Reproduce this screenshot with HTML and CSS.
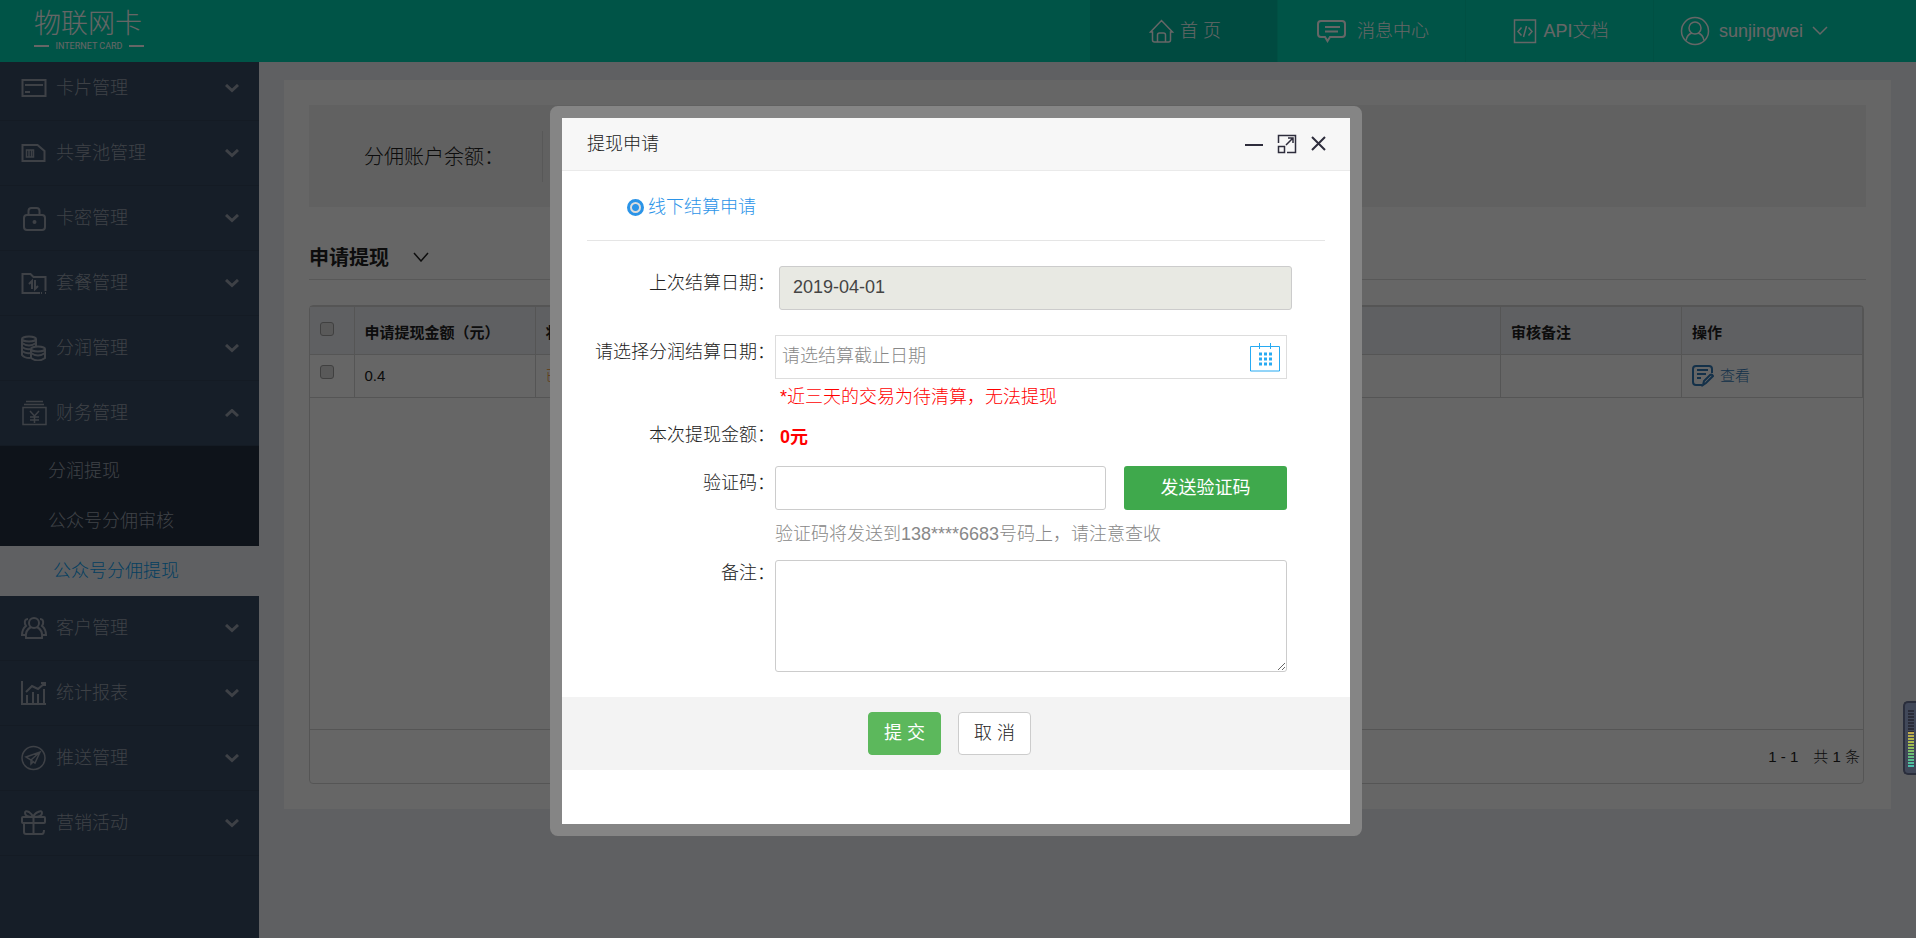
FILE: index.html
```html
<!DOCTYPE html>
<html lang="zh-CN">
<head>
<meta charset="utf-8">
<title>物联网卡</title>
<link rel="stylesheet" href="styles.css">
</head>
<body>
<header class="topbar">
  <div class="logo">
    <strong class="logo-name">物联网卡</strong>
    <span class="logo-sub">INTERNET CARD</span>
  </div>
  <nav class="topnav">
    <a class="topnav-item is-active" href="#"><svg width="25" height="26" viewBox="0 0 25 26"><path d="M3.500 14H1.500L12.500 2.500 23.500 14h-2v8q0 2-2 2h-14q-2 0-2-2zM8.500 24v-7q0-2 2-2h4q2 0 2 2v7"/></svg><span>首 页</span></a>
    <a class="topnav-item is-wide" href="#"><svg class="heavy" width="29" height="26" viewBox="0 0 29 26"><path d="M4 3h21q3 0 3 3v10q0 3-3 3H13l-2.500 4L8 19H4q-3 0-3-3V6q0-3 3-3zM8 9h15M8 13.500h13"/></svg><span>消息中心</span></a>
    <a class="topnav-item" href="#"><svg width="24" height="26" viewBox="0 0 24 26"><path d="M1.500 2h21v22.500h-21zM8.500 9.500l-3.500 4 3.500 4M15.500 9.500l3.500 4-3.500 4M13.500 8l-3 11"/></svg><span>API文档</span></a>
    <a class="topnav-item is-user" href="#"><svg width="30" height="30" viewBox="0 0 30 30"><circle cx="15" cy="15" r="13.500"/><circle cx="15" cy="12" r="6"/><path d="M6 24.500q1-6 6-7.500M24 24.500q-1-6-6-7.500"/></svg><span>sunjingwei</span><svg width="16" height="10" viewBox="0 0 16 10"><path d="m1 1 7 7 7-7"/></svg></a>
  </nav>
</header>
<div class="shell">
  <nav class="sidebar">
    <ul class="menu">
      <li><a class="menu-item" href="#"><svg width="26" height="26" viewBox="0 0 26 26"><path d="M1.500 5h23v16h-23zM4 10h18M4 17h5"/></svg><span>卡片管理</span><svg class="arrow" width="14" height="9" viewBox="0 0 14 9"><path d="m1 1 6 5.500 6-5.500"/></svg></a></li>
      <li><a class="menu-item" href="#"><svg width="26" height="26" viewBox="0 0 26 26"><path d="M1.500 5h15l7 6v10h-22z"/><path class="thin" d="M5.500 10h7v7h-7zM8 10v7M10.500 10v7"/></svg><span>共享池管理</span><svg class="arrow" width="14" height="9" viewBox="0 0 14 9"><path d="m1 1 6 5.500 6-5.500"/></svg></a></li>
      <li><a class="menu-item" href="#"><svg width="26" height="26" viewBox="0 0 26 26"><rect x="3" y="10" width="21" height="15" rx="3"/><path d="M7.500 10V6q0-3 3-3h5q3 0 3 3v4"/><circle cx="13.500" cy="17" r="1"/></svg><span>卡密管理</span><svg class="arrow" width="14" height="9" viewBox="0 0 14 9"><path d="m1 1 6 5.500 6-5.500"/></svg></a></li>
      <li><a class="menu-item" href="#"><svg width="26" height="26" viewBox="0 0 26 26"><path d="M19 23H1.500V4h8l3 3h12v14M8 14l3-3v8M14 10v9l3-3M20 23h1M24 23h1"/></svg><span>套餐管理</span><svg class="arrow" width="14" height="9" viewBox="0 0 14 9"><path d="m1 1 6 5.500 6-5.500"/></svg></a></li>
      <li><a class="menu-item" href="#"><svg width="26" height="26" viewBox="0 0 26 26"><ellipse cx="8" cy="4" rx="7" ry="2.500"/><path d="M1 4v16q2 3 8 3M15 4v7M1 8q7 5 14 0M1 12q4 3 8 2M1 16q4 3 8 2"/><ellipse cx="17" cy="14" rx="7" ry="2.500"/><path d="M10 14v9q7 5 14 0v-9M10 18q7 5 14 0"/></svg><span>分润管理</span><svg class="arrow" width="14" height="9" viewBox="0 0 14 9"><path d="m1 1 6 5.500 6-5.500"/></svg></a></li>
      <li>
        <a class="menu-item is-open" href="#"><svg class="thin" width="26" height="26" viewBox="0 0 26 26"><path d="M5 1.500h17M3 4.500h20M2 7.500h23v17H2zM9 11l4.500 5 4.500-5M9 17h9M9 20h9M13.500 16v7"/></svg><span>财务管理</span><svg class="arrow" width="14" height="9" viewBox="0 0 14 9"><path d="m1 7 6-5.500 6 5.500"/></svg></a>
        <ul class="submenu">
          <li><a href="#">分润提现</a></li>
          <li><a href="#">公众号分佣审核</a></li>
          <li><a class="is-current" href="#">公众号分佣提现</a></li>
        </ul>
      </li>
      <li><a class="menu-item" href="#"><svg width="26" height="26" viewBox="0 0 26 26"><circle cx="13" cy="8" r="5"/><path d="M10 12q-6 3-5 11h16q1-8-5-11M7 4q-4 0-3 5l1 2q-4 3-4 9h3M19 4q4 0 3 5l-1 2q4 3 4 9h-3"/></svg><span>客户管理</span><svg class="arrow" width="14" height="9" viewBox="0 0 14 9"><path d="m1 1 6 5.500 6-5.500"/></svg></a></li>
      <li><a class="menu-item" href="#"><svg width="26" height="26" viewBox="0 0 26 26"><path d="M1 1v23h24M6 23v-8M12 23V12M17 23v-9M23 23V9M5 12l6-6 6 3 7-6M20 3h4v3"/></svg><span>统计报表</span><svg class="arrow" width="14" height="9" viewBox="0 0 14 9"><path d="m1 1 6 5.500 6-5.500"/></svg></a></li>
      <li><a class="menu-item" href="#"><svg class="thin" width="26" height="26" viewBox="0 0 26 26"><circle cx="12.500" cy="13" r="11.500"/><path d="m5 12 14-5-5 11-4-3zM10 15l9-8M10 15v4l2-2"/></svg><span>推送管理</span><svg class="arrow" width="14" height="9" viewBox="0 0 14 9"><path d="m1 1 6 5.500 6-5.500"/></svg></a></li>
      <li><a class="menu-item" href="#"><svg width="26" height="26" viewBox="0 0 26 26"><rect x="1" y="7" width="23" height="6" rx="1"/><path d="M3 13v9q0 2 2 2h16q2 0 2-4M12.500 7v17M12 7Q4 7 4 3q0-3 4-1 3 2 4 5 2-4 5-5 4-2 4 1 0 4-8 4"/></svg><span>营销活动</span><svg class="arrow" width="14" height="9" viewBox="0 0 14 9"><path d="m1 1 6 5.500 6-5.500"/></svg></a></li>
    </ul>
  </nav>
  <main class="content">
    <section class="panel">
      <div class="balance"><span class="balance-label">分佣账户余额<span class="colon">：</span></span></div>
      <h1 class="section-title">申请提现<svg width="16" height="10" viewBox="0 0 16 10"><path d="m1 1 7 8 7-8"/></svg></h1>
      <div class="grid">
        <table class="records">
          <colgroup><col class="col-check"><col class="col-std"><col class="col-std"><col><col class="col-std"><col class="col-std"></colgroup>
          <thead>
            <tr><th><input type="checkbox" aria-label="全选"></th><th>申请提现金额（元）</th><th>状态</th><th></th><th>审核备注</th><th>操作</th></tr>
          </thead>
          <tbody>
            <tr><td><input type="checkbox" aria-label="选择"></td><td>0.4</td><td class="status">已审核</td><td></td><td></td><td><a class="view" href="#"><svg width="22" height="22" viewBox="0 0 22 22"><path d="M10 20H4q-3 0-3-3V4q0-3 3-3h13q3 0 3 3v4M5 5h11M5 9h9M5 13h4"/><path d="m11 20 1-4 6-6q2-1 3 1l-7 7z"/></svg>查看</a></td></tr>
          </tbody>
        </table>
        <footer class="pager"><span>1 - 1</span><span>共 1 条</span></footer>
      </div>
    </section>
  </main>
</div>
<div class="overlay">
  <div class="dialog" role="dialog" aria-labelledby="dialog-title">
    <header class="dialog-head">
      <h2 id="dialog-title">提现申请</h2>
      <button type="button" aria-label="最小化"><svg width="20" height="20" viewBox="0 0 20 20"><path d="M1 11h18"/></svg></button>
      <button type="button" aria-label="最大化"><svg class="thin" width="20" height="20" viewBox="0 0 20 20"><path d="M1.500 9V1.500h17v17H10M1.500 12.500h6v6h-6zM9 11l7-7M11 4h5v5"/></svg></button>
      <button type="button" aria-label="关闭"><svg width="20" height="20" viewBox="0 0 20 20"><path d="m4 3 13 13M17 3 4 16"/></svg></button>
    </header>
    <form class="form">
      <div class="mode"><input type="radio" id="offline" name="mode" checked><label for="offline">线下结算申请</label></div>
      <div class="row row-last"><label for="last">上次结算日期：</label><div class="field inset"><input class="box is-disabled" id="last" type="text" value="2019-04-01" readonly></div></div>
      <div class="row row-date"><label for="end">请选择分润结算日期：</label><div class="field">
        <div class="date"><input class="box" id="end" type="text" placeholder="请选结算截止日期"><svg class="calendar" width="30" height="30" viewBox="0 0 30 30"><path d="M.500 4.500h29v24.500H.500zM9.500 1v6M20.500 1v6"/><path class="dots" d="M9 12h14M9 17h14M9 22h14"/></svg></div>
        <p class="warn">*近三天的交易为待清算，无法提现</p></div></div>
      <div class="row row-amount"><span class="label">本次提现金额：</span><strong class="amount">0元</strong></div>
      <div class="row row-code"><label for="code">验证码：</label><div class="field">
        <div class="code"><input class="box" id="code" type="text"><button class="send" type="button">发送验证码</button></div>
        <p class="hint">验证码将发送到138****6683号码上，请注意查收</p></div></div>
      <div class="row row-remark"><label for="remark">备注：</label><div class="field"><textarea class="box" id="remark"></textarea></div></div>
    </form>
    <footer class="dialog-foot"><button class="btn submit" type="button">提 交</button><button class="btn cancel" type="button">取 消</button></footer>
  </div>
</div>
<div class="meter"><div class="meter-off"></div><div class="meter-on"></div></div>
</body>
</html>
```

FILE: styles.css
```css
* { box-sizing: border-box; }
body { margin: 0; height: 100vh; display: flex; flex-direction: column; overflow: hidden; background: #eef0f5; color: #222; font: 300 18px/26px "Liberation Sans", "Noto Sans CJK SC", sans-serif; }
a { color: inherit; text-decoration: none; }
ul { list-style: none; margin: 0; padding: 0; }
p, h1, h2 { margin: 0; }
svg { display: block; flex: none; fill: none; stroke: currentColor; stroke-width: 2; }
button, input, textarea { font: inherit; color: inherit; }

.topbar { flex: none; display: flex; justify-content: space-between; height: 62px; background: #00d2b2; color: #fff; }
.logo { width: 110px; margin-left: 34px; padding-top: 5px; display: flex; flex-direction: column; }
.logo-name { font: 300 27px/34px "Noto Sans CJK SC", sans-serif; }
.logo-sub { display: flex; align-items: center; justify-content: space-between; font: 9px/14px Roboto, sans-serif; white-space: nowrap; }
.logo-sub::before, .logo-sub::after { content: ""; width: 15px; height: 2px; background: #fff; }
.topnav { display: flex; }
.topnav-item { width: 188px; display: flex; align-items: center; justify-content: center; gap: 6px; padding-left: 3px; border-right: 1px solid #00c8a8; }
.topnav-item svg { stroke-width: 1.5; }
.topnav-item.is-active { background: #00b9a0; }
.topnav-item.is-wide { gap: 11px; }
.topnav-item.is-user { width: 262px; justify-content: flex-start; padding-left: 26px; gap: 9px; border: 0; }
.topnav-item .heavy { stroke-width: 2; }

.shell { flex: 1; display: flex; min-height: 0; }
.sidebar { flex: none; width: 259px; overflow: hidden; background: #374b64; color: #9ba3b0; }
.menu { margin-top: -6px; }
.menu-item { height: 65px; display: flex; align-items: center; gap: 9px; padding: 0 20px 0 21px; border-bottom: 1px solid #32445b; }
.menu-item .arrow { margin-left: auto; stroke-width: 3; }
svg.thin, .thin { stroke-width: 1.5; }
.submenu { background: #253041; }
.submenu a { display: block; padding: 12px 0 12px 48px; }
.submenu .is-current { padding-left: 53px; background: #eef0f5; color: #0a9ef0; }

.content { flex: 1; min-width: 0; padding: 18px 25px 0; }
.panel { padding: 25px; background: #fff; }
.balance { height: 102px; display: flex; align-items: center; padding-left: 55px; background: #f2f2f2; font-size: 20px; }
.balance-label { width: 179px; padding: 12px 0; border-right: 1px solid #ddd; }
.colon { font-family: "Noto Sans CJK TC", sans-serif; }
.section-title { display: flex; align-items: center; gap: 24px; height: 73px; padding-top: 28px; border-bottom: 1px solid #ddd; font: bold 20px/26px "Noto Sans CJK SC", sans-serif; }
.section-title svg { stroke-width: 1.5; }
.grid { height: 479px; margin: 25px 2px 0 0; display: flex; flex-direction: column; justify-content: space-between; border: 1px solid #d5d5d5; border-radius: 4px; font-size: 15px; line-height: 22px; }
.records { width: 100%; border-collapse: collapse; table-layout: fixed; }
.records th, .records td { border: 1px solid #d5d5d5; padding: 0 10px; text-align: left; }
.records th { height: 48px; background: #eef0f5; color: #222; font-weight: bold; padding-top: 4px; }
.records td { height: 43px; }
.records tr > :first-child { border-left: 0; }
.records input { appearance: none; display: block; width: 14px; height: 14px; margin: 0 0 8px; border: 1px solid #a0a0a0; border-radius: 3px; background: #dedede; }
.col-check { width: 44px; }
.col-std { width: 181px; }
.records .status { color: #f0932b; }
.view { display: flex; align-items: center; gap: 6px; color: #337ab7; }
.pager { height: 54px; display: flex; align-items: center; justify-content: flex-end; gap: 15px; padding-right: 3px; border-top: 1px solid #d5d5d5; }

.overlay { position: fixed; inset: 0; display: flex; align-items: center; justify-content: center; padding: 3px 4px 0 0; background: rgba(0, 0, 0, .6); }
.dialog { width: 812px; padding-bottom: 54px; border: 12px solid #858585; border-radius: 8px; background: linear-gradient(#fff, #fff) padding-box; }
.dialog-head { display: flex; align-items: center; gap: 13px; height: 53px; padding: 0 22px 0 25px; border-bottom: 1px solid #eaeaea; background: #f7f7f7; }
.dialog-head h2 { margin-right: auto; font-size: 18px; font-weight: 300; }
.dialog-head button { padding: 0; border: 0; background: none; color: #2e2d3c; }
.dialog-head button:last-child { margin-left: -2px; }
.form { padding: 0 25px 25px; }
.mode { display: flex; align-items: center; gap: 4px; height: 70px; padding: 4px 0 0 40px; border-bottom: 1px solid #e5e5e5; color: #2b94e8; }
.mode input { appearance: none; width: 17px; height: 17px; margin: 0; border: 3px solid #2b94e8; border-radius: 50%; background: radial-gradient(circle, #2b94e8 0 3px, #ddd 4px); }
.row { display: grid; grid-template-columns: 188px 1fr; padding-right: 38px; }
.row > label, .label { padding-top: 4px; text-align: right; white-space: nowrap; }
.row-last { margin-top: 25px; }
.row-date { margin-top: 25px; }
.row-amount { margin-top: 8px; }
.row-code { margin-top: 16px; }
.row-remark > label { padding-top: 0; }
.inset { margin: 0 -5px 0 4px; }
.box { display: block; width: 100%; height: 44px; padding: 0 13px; border: 1px solid #ccc; border-radius: 3px; background: #fff; outline: 0; }
.box.is-disabled { background: #e8e9e3; color: #444; }
.date { position: relative; }
.date .box { padding: 0 50px 0 6px; border-color: #ddd; border-radius: 0; }
.date .box::placeholder { color: #888; }
.calendar { position: absolute; right: 7px; top: 7px; color: #27aaf2; stroke-width: 1; }
.dots { stroke-width: 3; stroke-dasharray: 3 2; }
.warn { margin: 5px 0 0 5px; color: #f00; }
.amount { padding: 6px 0 0 5px; color: #f00; font-weight: bold; }
.code { display: flex; gap: 18px; }
.code .box { flex: 1; min-width: 0; }
.send { width: 163px; border: 0; border-radius: 3px; background: #3fa94c; color: #fff; font-weight: 400; }
.hint { margin: 11px 0 13px; color: #888; }
textarea.box { height: 112px; resize: vertical; }
.dialog-foot { display: flex; justify-content: center; gap: 17px; padding: 15px 13px 15px 0; background: #f3f3f3; }
.btn { width: 73px; height: 43px; padding: 0; border: 1px solid #5cb85c; border-radius: 4px; }
.submit { background: #5cb85c; color: #fff; font-weight: 400; }
.cancel { border-color: #ccc; background: #fff; }

.meter { position: fixed; right: 0; top: 701px; width: 13px; height: 74px; padding: 7px 2px 7px 3px; border: 2px solid #2a2e3c; border-right: 0; border-radius: 5px 0 0 5px; background: #414859; }
.meter-off { height: 22px; background: repeating-linear-gradient(#2a2c38 0 2px, #414859 2px 3px); }
.meter-on { height: 35px; background: repeating-linear-gradient(transparent 0 2px, #414859 2px 3px), linear-gradient(#c2a84d, #a9bd4b, #65bd7a, #47bfb0); }
```
